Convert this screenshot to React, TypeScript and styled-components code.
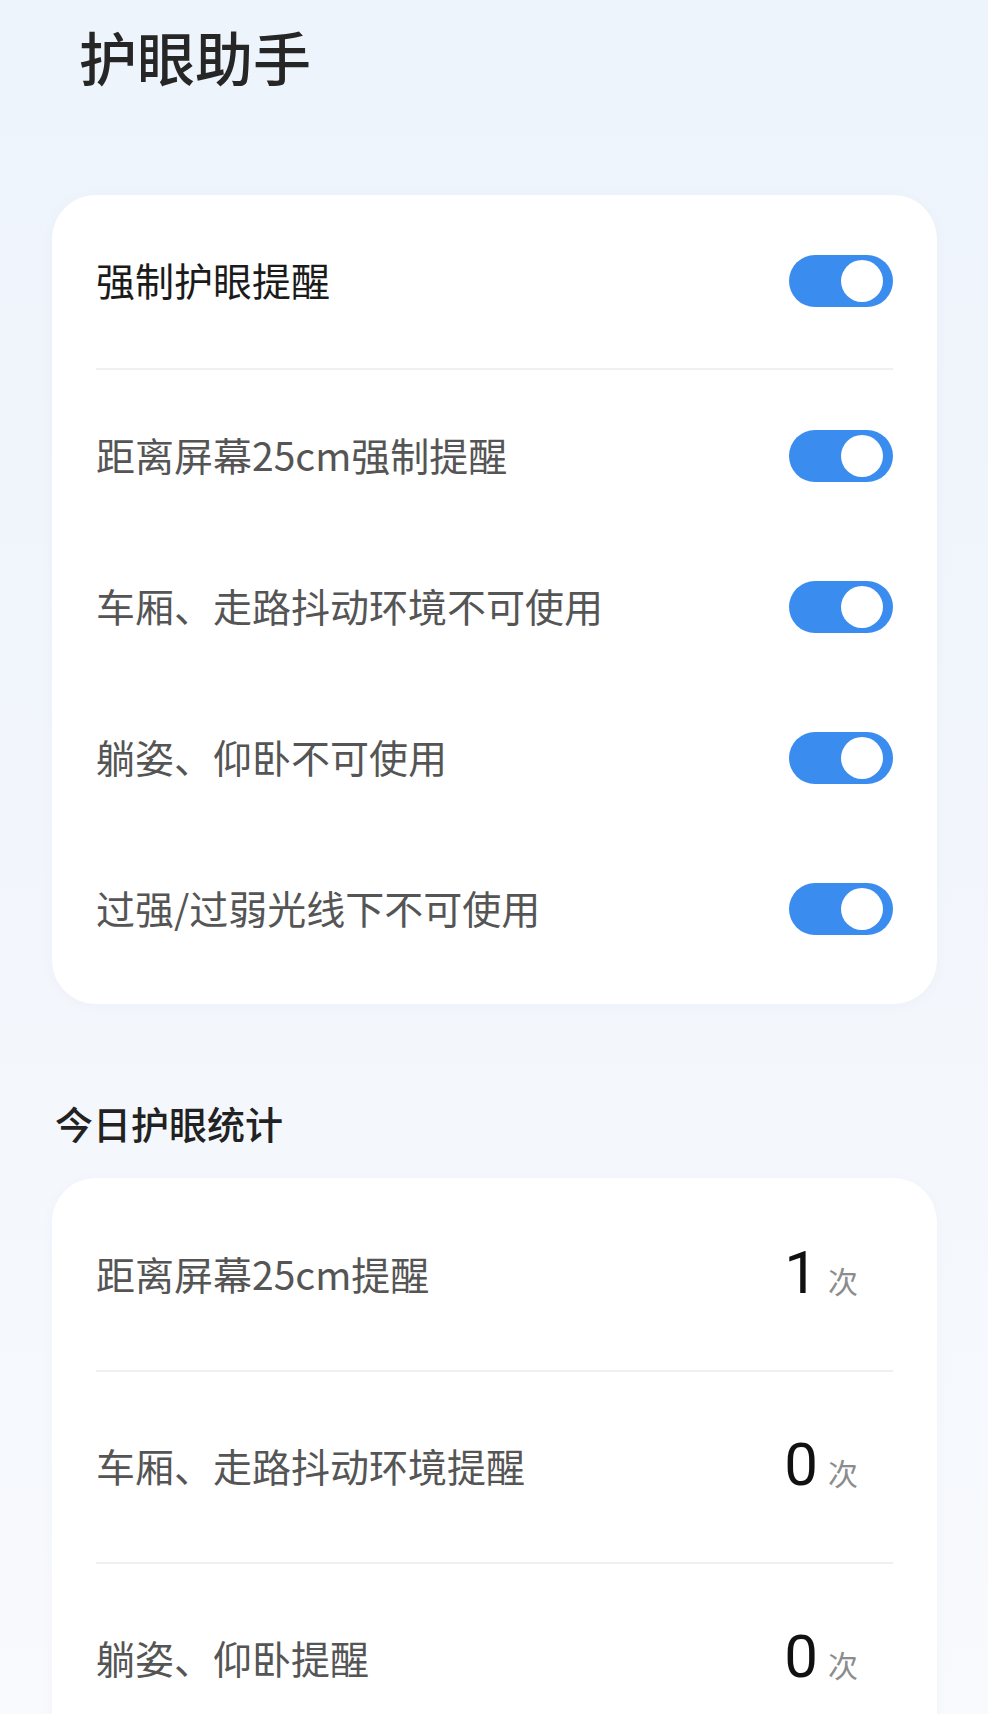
import React from "react";
import styled, { createGlobalStyle } from "styled-components";

const GlobalStyle = createGlobalStyle`
  html, body {
    margin: 0;
    padding: 0;
  }

  body {
    font-family: "Noto Sans CJK SC", "Noto Sans", sans-serif;
    background: #f5f8fc;
  }
`;

const Screen = styled.main`
  height: 1714px;
  overflow: hidden;
  box-sizing: border-box;
  padding: 0 51px 0 52px;
  background: linear-gradient(180deg, #eef4fc 0%, #f2f6fc 50%, #f8fafd 100%);
`;

const Title = styled.h1`
  margin: 0;
  padding: 22px 0 0 27px;
  font-size: 58px;
  line-height: 68px;
  font-weight: 500;
  color: #262626;
`;

const Card = styled.section<{ $gap: number }>`
  margin-top: ${(p) => p.$gap}px;
  padding: 0 44px;
  background: #fff;
  border-radius: 44px;
  box-shadow: 0 2px 14px rgba(30, 60, 120, 0.03);
`;

const List = styled.div<{ $pad: string }>`
  display: flex;
  flex-direction: column;
  padding: ${(p) => p.$pad};
`;

const SwitchRow = styled.div<{ $height: number; $strong?: boolean }>`
  display: flex;
  align-items: center;
  justify-content: space-between;
  box-sizing: border-box;
  height: ${(p) => p.$height}px;
  padding-bottom: ${(p) => (p.$strong ? 2 : 0)}px;
  font-size: 39px;
  color: ${(p) => (p.$strong ? "#1b1b1b" : "#555")};
`;

const Label = styled.span<{ $lift: number }>`
  padding-bottom: ${(p) => p.$lift}px;
`;

const Divider = styled.hr`
  margin: 0;
  border: 0;
  height: 2px;
  background: #f0f0f0;
`;

const Toggle = styled.button<{ $on: boolean }>`
  display: flex;
  align-items: center;
  justify-content: ${(p) => (p.$on ? "flex-end" : "flex-start")};
  box-sizing: border-box;
  width: 104px;
  height: 52px;
  padding: 0 10px 0 6px;
  border: 0;
  border-radius: 26px;
  background: ${(p) => (p.$on ? "#3b8cef" : "#d6dae1")};
  cursor: pointer;
`;

const Knob = styled.span`
  width: 42px;
  height: 42px;
  border-radius: 50%;
  background: #fff;
`;

const SectionTitle = styled.h2`
  margin: 94px 0 0 3px;
  font-size: 38px;
  line-height: 50px;
  font-weight: 500;
  color: #222;
`;

const StatRow = styled.div`
  display: flex;
  align-items: center;
  justify-content: space-between;
  height: 190px;
  font-size: 39px;
  color: #555;
`;

const Value = styled.div`
  display: flex;
  align-items: baseline;
  margin-right: 35px;
  padding-bottom: 4px;
`;

const Count = styled.span`
  font-family: Roboto, "Noto Sans", sans-serif;
  font-size: 60px;
  line-height: 1;
  color: #111;
`;

const Unit = styled.span`
  margin-left: 10px;
  font-size: 30px;
  color: #8c8c8c;
`;

const switches = [
  { label: "距离屏幕25cm强制提醒", on: true },
  { label: "车厢、走路抖动环境不可使用", on: true },
  { label: "躺姿、仰卧不可使用", on: true },
  { label: "过强/过弱光线下不可使用", on: true },
];

const stats = [
  { label: "距离屏幕25cm提醒", count: 1 },
  { label: "车厢、走路抖动环境提醒", count: 0 },
  { label: "躺姿、仰卧提醒", count: 0 },
];

function Switch({ on }: { on: boolean }) {
  return (
    <Toggle $on={on} role="switch" aria-checked={on}>
      <Knob />
    </Toggle>
  );
}

export default function App() {
  return (
    <>
      <GlobalStyle />
      <Screen>
        <Title>护眼助手</Title>

        <Card $gap={105}>
          <SwitchRow $height={173} $strong>
            <Label $lift={4}>强制护眼提醒</Label>
            <Switch on />
          </SwitchRow>
          <Divider />
          <List $pad="10px 0 20px">
            {switches.map((item) => (
              <SwitchRow key={item.label} $height={151}>
                <Label $lift={4}>{item.label}</Label>
                <Switch on={item.on} />
              </SwitchRow>
            ))}
          </List>
        </Card>

        <SectionTitle>今日护眼统计</SectionTitle>

        <Card $gap={30}>
          <List $pad="2px 0 0">
            {stats.map((item, i) => (
              <React.Fragment key={item.label}>
                {i > 0 && <Divider />}
                <StatRow>
                  <Label $lift={5}>{item.label}</Label>
                  <Value>
                    <Count>{item.count}</Count>
                    <Unit>次</Unit>
                  </Value>
                </StatRow>
              </React.Fragment>
            ))}
          </List>
        </Card>
      </Screen>
    </>
  );
}
